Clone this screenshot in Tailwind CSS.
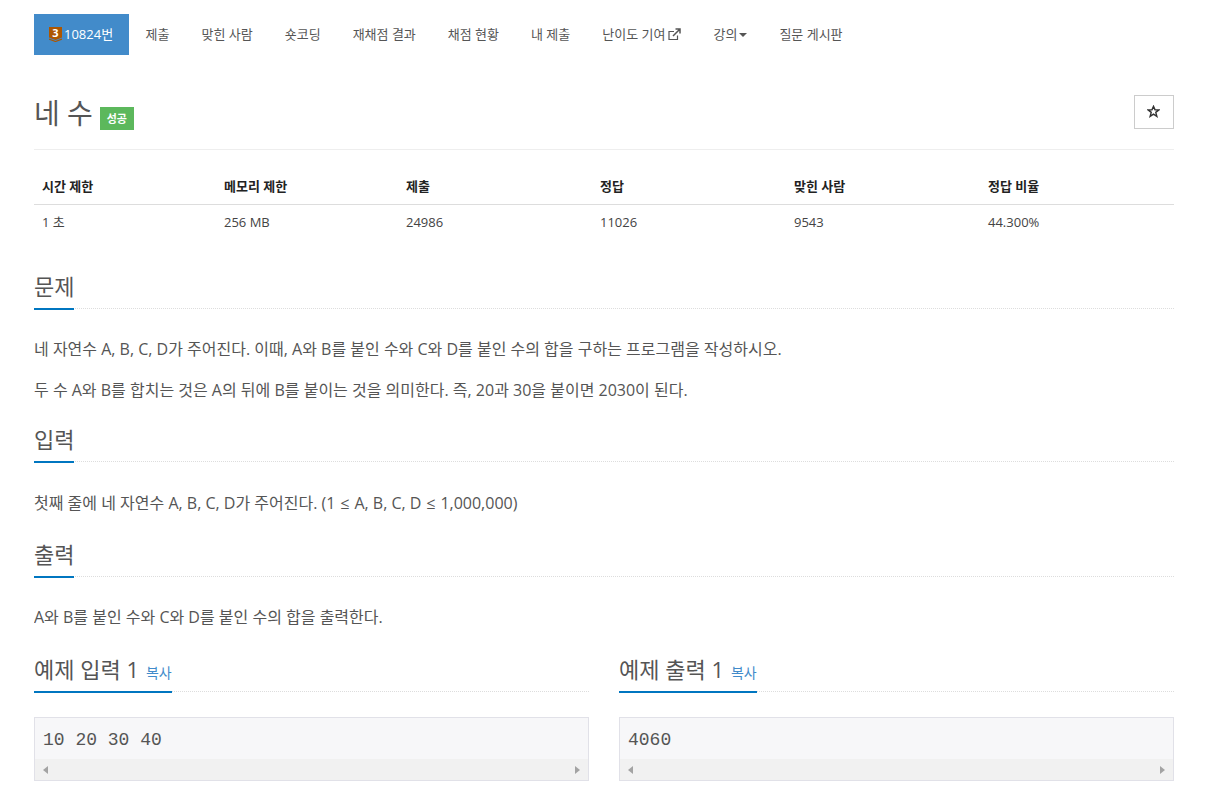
<!DOCTYPE html>
<html>

<head>
    <meta charset="utf-8">
    <title>10824번: 네 수</title>
    <script src="https://cdn.jsdelivr.net/npm/@tailwindcss/browser@4"></script>
</head>

<body class="bg-white text-[#333] overflow-hidden font-['Open_Sans','Noto_Sans_CJK_KR',sans-serif]">
    <div class="w-[1140px] ml-[34px] h-[796px] overflow-hidden">
        <!-- problem menu -->
        <ul class="flex gap-[2px] pt-[14px] text-[13px] leading-[41px] text-[#555]">
            <li class="flex items-center w-[94.6px] h-[41px] pl-[15px] bg-[#428bca] text-white whitespace-nowrap">
                <span class="relative w-[13px] h-[15px] mr-[2px] shrink-0">
                    <svg class="w-[13px] h-[15px]" viewBox="0 0 13 15">
                        <path d="M0 0H13V10.5L6.5 13L0 10.5Z" fill="#ad5600" />
                        <path d="M0 12L6.5 14.5L13 12" fill="none" stroke="#ad5600" stroke-width="1.2" />
                    </svg>
                    <span class="absolute left-0 top-0 w-[13px] text-center text-[11px] leading-[12px] font-bold">3</span>
                </span>
                10824번
            </li>
            <li class="px-[15px]">제출</li>
            <li class="px-[15px]">맞힌 사람</li>
            <li class="px-[15px]">숏코딩</li>
            <li class="px-[15px]">재채점 결과</li>
            <li class="px-[15px]">채점 현황</li>
            <li class="px-[15px]">내 제출</li>
            <li class="flex items-center px-[15px]">난이도 기여
                <svg class="w-[13px] h-[13px] ml-[3px]" viewBox="0 0 13 13" fill="none" stroke="#555" stroke-width="1.2">
                    <path d="M9.5 7.5V11.5H1V3.5H6" />
                    <path d="M5 8L11.5 1.5M7.5 1H12V5.5" stroke-width="1.5" />
                </svg>
            </li>
            <li class="flex items-center px-[15px]">강의
                <span class="ml-[2px] mt-[1px] border-x-[4px] border-t-[4px] border-x-transparent border-t-[#555]"></span>
            </li>
            <li class="px-[15px]">질문 게시판</li>
        </ul>

        <!-- title -->
        <div class="flex justify-between h-[95px] pt-[40px] border-b border-[#eee]">
            <h1 class="flex items-start text-[28px] leading-[36px] text-[#555]">네 수
                <span class="ml-[7px] mt-[12px] h-[23px] w-[34px] bg-[#5cb85c] text-white text-[11px] font-bold leading-[23px] text-center">성공</span>
            </h1>
            <button class="w-[40px] h-[34px] border border-[#ccc] flex items-center justify-center pr-[2px] pb-[2px]">
                <svg class="w-[13px] h-[13px]" viewBox="0 0 24 24" fill="none" stroke="#333" stroke-width="2.6">
                    <path d="M12 2.5L14.8 9H22L16.2 13.6L18.2 21L12 16.8L5.8 21L7.8 13.6L2 9H9.2Z" />
                </svg>
            </button>
        </div>

        <!-- limits -->
        <table class="w-full mt-[19px] text-[13px] text-left table-fixed">
            <thead>
                <tr class="h-[35px] border-b border-[#ddd] font-bold text-[#222]">
                    <th class="w-[182px] pl-[8px]">시간 제한</th>
                    <th class="w-[182px] pl-[8px]">메모리 제한</th>
                    <th class="w-[194px] pl-[8px]">제출</th>
                    <th class="w-[194px] pl-[8px]">정답</th>
                    <th class="w-[194px] pl-[8px]">맞힌 사람</th>
                    <th class="pl-[8px]">정답 비율</th>
                </tr>
            </thead>
            <tbody>
                <tr class="h-[36px] text-[#444]">
                    <td class="pl-[8px]">1 초</td>
                    <td class="pl-[8px]">256 MB</td>
                    <td class="pl-[8px]">24986</td>
                    <td class="pl-[8px]">11026</td>
                    <td class="pl-[8px]">9543</td>
                    <td class="pl-[8px]">44.300%</td>
                </tr>
            </tbody>
        </table>

        <!-- description -->
        <section class="mt-[30px]">
            <div class="border-b border-dotted border-[#ddd] h-[39px]">
                <h2 class="inline-block h-[40px] text-[22px] leading-[32px] text-[#555] border-b-2 border-[#0076c0] w-[40px] whitespace-nowrap">문제</h2>
            </div>
            <p class="mt-[29px] text-[16px] leading-[22px] text-[#555]">네 자연수 A, B, C, D가 주어진다. 이때, A와 B를 붙인 수와 C와 D를 붙인 수의 합을 구하는 프로그램을 작성하시오.</p>
            <p class="mt-[19px] text-[16px] leading-[22px] text-[#555]">두 수 A와 B를 합치는 것은 A의 뒤에 B를 붙이는 것을 의미한다. 즉, 20과 30을 붙이면 2030이 된다.</p>
        </section>

        <section class="mt-[22px]">
            <div class="border-b border-dotted border-[#ddd] h-[39px]">
                <h2 class="inline-block h-[40px] text-[22px] leading-[32px] text-[#555] border-b-2 border-[#0076c0] w-[40px] whitespace-nowrap">입력</h2>
            </div>
            <p class="mt-[30px] text-[16px] leading-[22px] text-[#555]">첫째 줄에 네 자연수 A, B, C, D가 주어진다. (1 <span class="mx-[0.75px]">≤</span> A, B, C, D <span class="mx-[0.75px]">≤</span> 1,000,000)</p>
        </section>

        <section class="mt-[24px]">
            <div class="border-b border-dotted border-[#ddd] h-[39px]">
                <h2 class="inline-block h-[40px] text-[22px] leading-[32px] text-[#555] border-b-2 border-[#0076c0] w-[40px] whitespace-nowrap">출력</h2>
            </div>
            <p class="mt-[29px] text-[16px] leading-[22px] text-[#555]">A와 B를 붙인 수와 C와 D를 붙인 수의 합을 출력한다.</p>
        </section>

        <!-- samples -->
        <div class="grid grid-cols-2 gap-[30px] mt-[25px]">
            <div>
                <div class="border-b border-dotted border-[#ddd] h-[39px]">
                    <h2 class="inline-flex items-baseline gap-[7px] h-[40px] w-[138px] text-[22px] leading-[32px] text-[#555] border-b-2 border-[#0076c0] whitespace-nowrap">예제 입력 1 <span class="text-[14px] text-[#428bca]">복사</span></h2>
                </div>
                <div class="mt-[25px] h-[64px] bg-[#f7f7f9] border border-[#e1e1e8]">
                    <pre class="h-[41px] px-[8px] pt-[11px] text-[18px] leading-[22px] text-[#555] font-['Liberation_Mono',monospace]">10 20 30 40</pre>
                    <div class="flex items-center justify-between h-[21px] px-[8px] bg-[#f1f1f1]">
                        <span class="border-y-[4px] border-r-[5px] border-y-transparent border-r-[#a3a3a3]"></span>
                        <span class="border-y-[4px] border-l-[5px] border-y-transparent border-l-[#a3a3a3]"></span>
                    </div>
                </div>
            </div>
            <div>
                <div class="border-b border-dotted border-[#ddd] h-[39px]">
                    <h2 class="inline-flex items-baseline gap-[7px] h-[40px] w-[138px] text-[22px] leading-[32px] text-[#555] border-b-2 border-[#0076c0] whitespace-nowrap">예제 출력 1 <span class="text-[14px] text-[#428bca]">복사</span></h2>
                </div>
                <div class="mt-[25px] h-[64px] bg-[#f7f7f9] border border-[#e1e1e8]">
                    <pre class="h-[41px] px-[8px] pt-[11px] text-[18px] leading-[22px] text-[#555] font-['Liberation_Mono',monospace]">4060</pre>
                    <div class="flex items-center justify-between h-[21px] px-[8px] bg-[#f1f1f1]">
                        <span class="border-y-[4px] border-r-[5px] border-y-transparent border-r-[#a3a3a3]"></span>
                        <span class="border-y-[4px] border-l-[5px] border-y-transparent border-l-[#a3a3a3]"></span>
                    </div>
                </div>
            </div>
        </div>
    </div>
</body>

</html>
